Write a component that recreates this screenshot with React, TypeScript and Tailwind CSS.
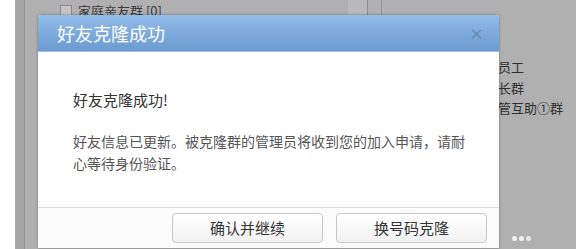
import React from 'react';

const bgRows = [
  { text: '本公司员工', top: 'top-[57px]' },
  { text: '班级家长群', top: 'top-[78px]' },
  { text: '新手主管互助①群', top: 'top-[98px]' },
];

const App = () => {
  return (
    <div
      className="relative w-[576px] h-[249px] overflow-hidden bg-white flex"
      style={{ fontFamily: '"Noto Sans CJK SC", "Noto Sans", sans-serif' }}
    >
      {/* background window behind the dialog */}
      <div className="ml-[15px] flex-1 flex bg-[#aaaaaa]">
        <div className="w-[10px] bg-[#a5a5a5] border-r border-[#8f8f8f]"></div>
        <div className="flex-1 relative bg-[#b0b0b0]">
          <div className="flex items-center gap-[6px] ml-[35px] mt-[3px] text-[13px] leading-[15px] text-[#3a3a3a]">
            <span className="w-[12px] h-[12px] border border-[#8a8a8a] bg-[#c4c4c4]"></span>
            <span>家庭亲友群 [0]</span>
          </div>
          {/* column strip at top right */}
          <div className="absolute left-[323px] top-0 h-[16px] w-[20px] bg-[#b9b9b9] border-r border-[#8e8e8e]"></div>
          <div className="absolute left-[356px] top-0 h-[16px] w-px bg-[#959595]"></div>
          {bgRows.map((row) => (
            <div
              key={row.text}
              className={`absolute left-[434px] ${row.top} text-[13px] leading-[20px] text-[#2e2e2e] whitespace-nowrap`}
            >
              {row.text}
            </div>
          ))}
          {/* watermark dots */}
          <div className="absolute left-[487px] top-[236px] flex gap-[2px]">
            <span className="w-[5px] h-[5px] rounded-full bg-white/80"></span>
            <span className="w-[5px] h-[5px] rounded-full bg-white/80"></span>
            <span className="w-[5px] h-[5px] rounded-full bg-white/70"></span>
          </div>
        </div>
      </div>

      {/* Dialog */}
      <div className="absolute left-[38px] top-[15px] w-[461px] h-[233px] flex flex-col bg-white rounded-t-[3px] shadow-[0_0_3px_rgba(0,0,0,0.35)]">
        <div className="h-[37px] flex items-center justify-between pl-[19px] pr-[15px] rounded-t-[3px] bg-gradient-to-b from-[#92bbe8] to-[#6b9bd1] border-b border-[#9fbfe2]">
          <span className="text-[18px] leading-[20px] text-white">好友克隆成功</span>
          <span className="text-[15px] font-bold text-[#6a8cb5] leading-none">×</span>
        </div>
        <div className="flex-1 pl-[35px] pt-[38px]">
          <div className="text-[15px] leading-[20px] text-[#333333]">好友克隆成功!</div>
          <p className="mt-[20px] w-[398px] text-[14px] leading-[22px] text-[#555555]">
            好友信息已更新。被克隆群的管理员将收到您的加入申请，请耐心等待身份验证。
          </p>
        </div>
        <div className="h-[41px] border-t border-[#dddddd] bg-[#fbfbfb] flex justify-end items-start pt-[5px] pr-[12px] gap-[13px]">
          <button className="w-[151px] h-[30px] rounded-[4px] border border-[#c8c8c8] bg-gradient-to-b from-white to-[#f2f2f2] text-[15px] text-[#333333]">
            确认并继续
          </button>
          <button className="w-[151px] h-[30px] rounded-[4px] border border-[#c8c8c8] bg-gradient-to-b from-white to-[#f2f2f2] text-[15px] text-[#333333]">
            换号码克隆
          </button>
        </div>
      </div>
    </div>
  );
};

export default App;
